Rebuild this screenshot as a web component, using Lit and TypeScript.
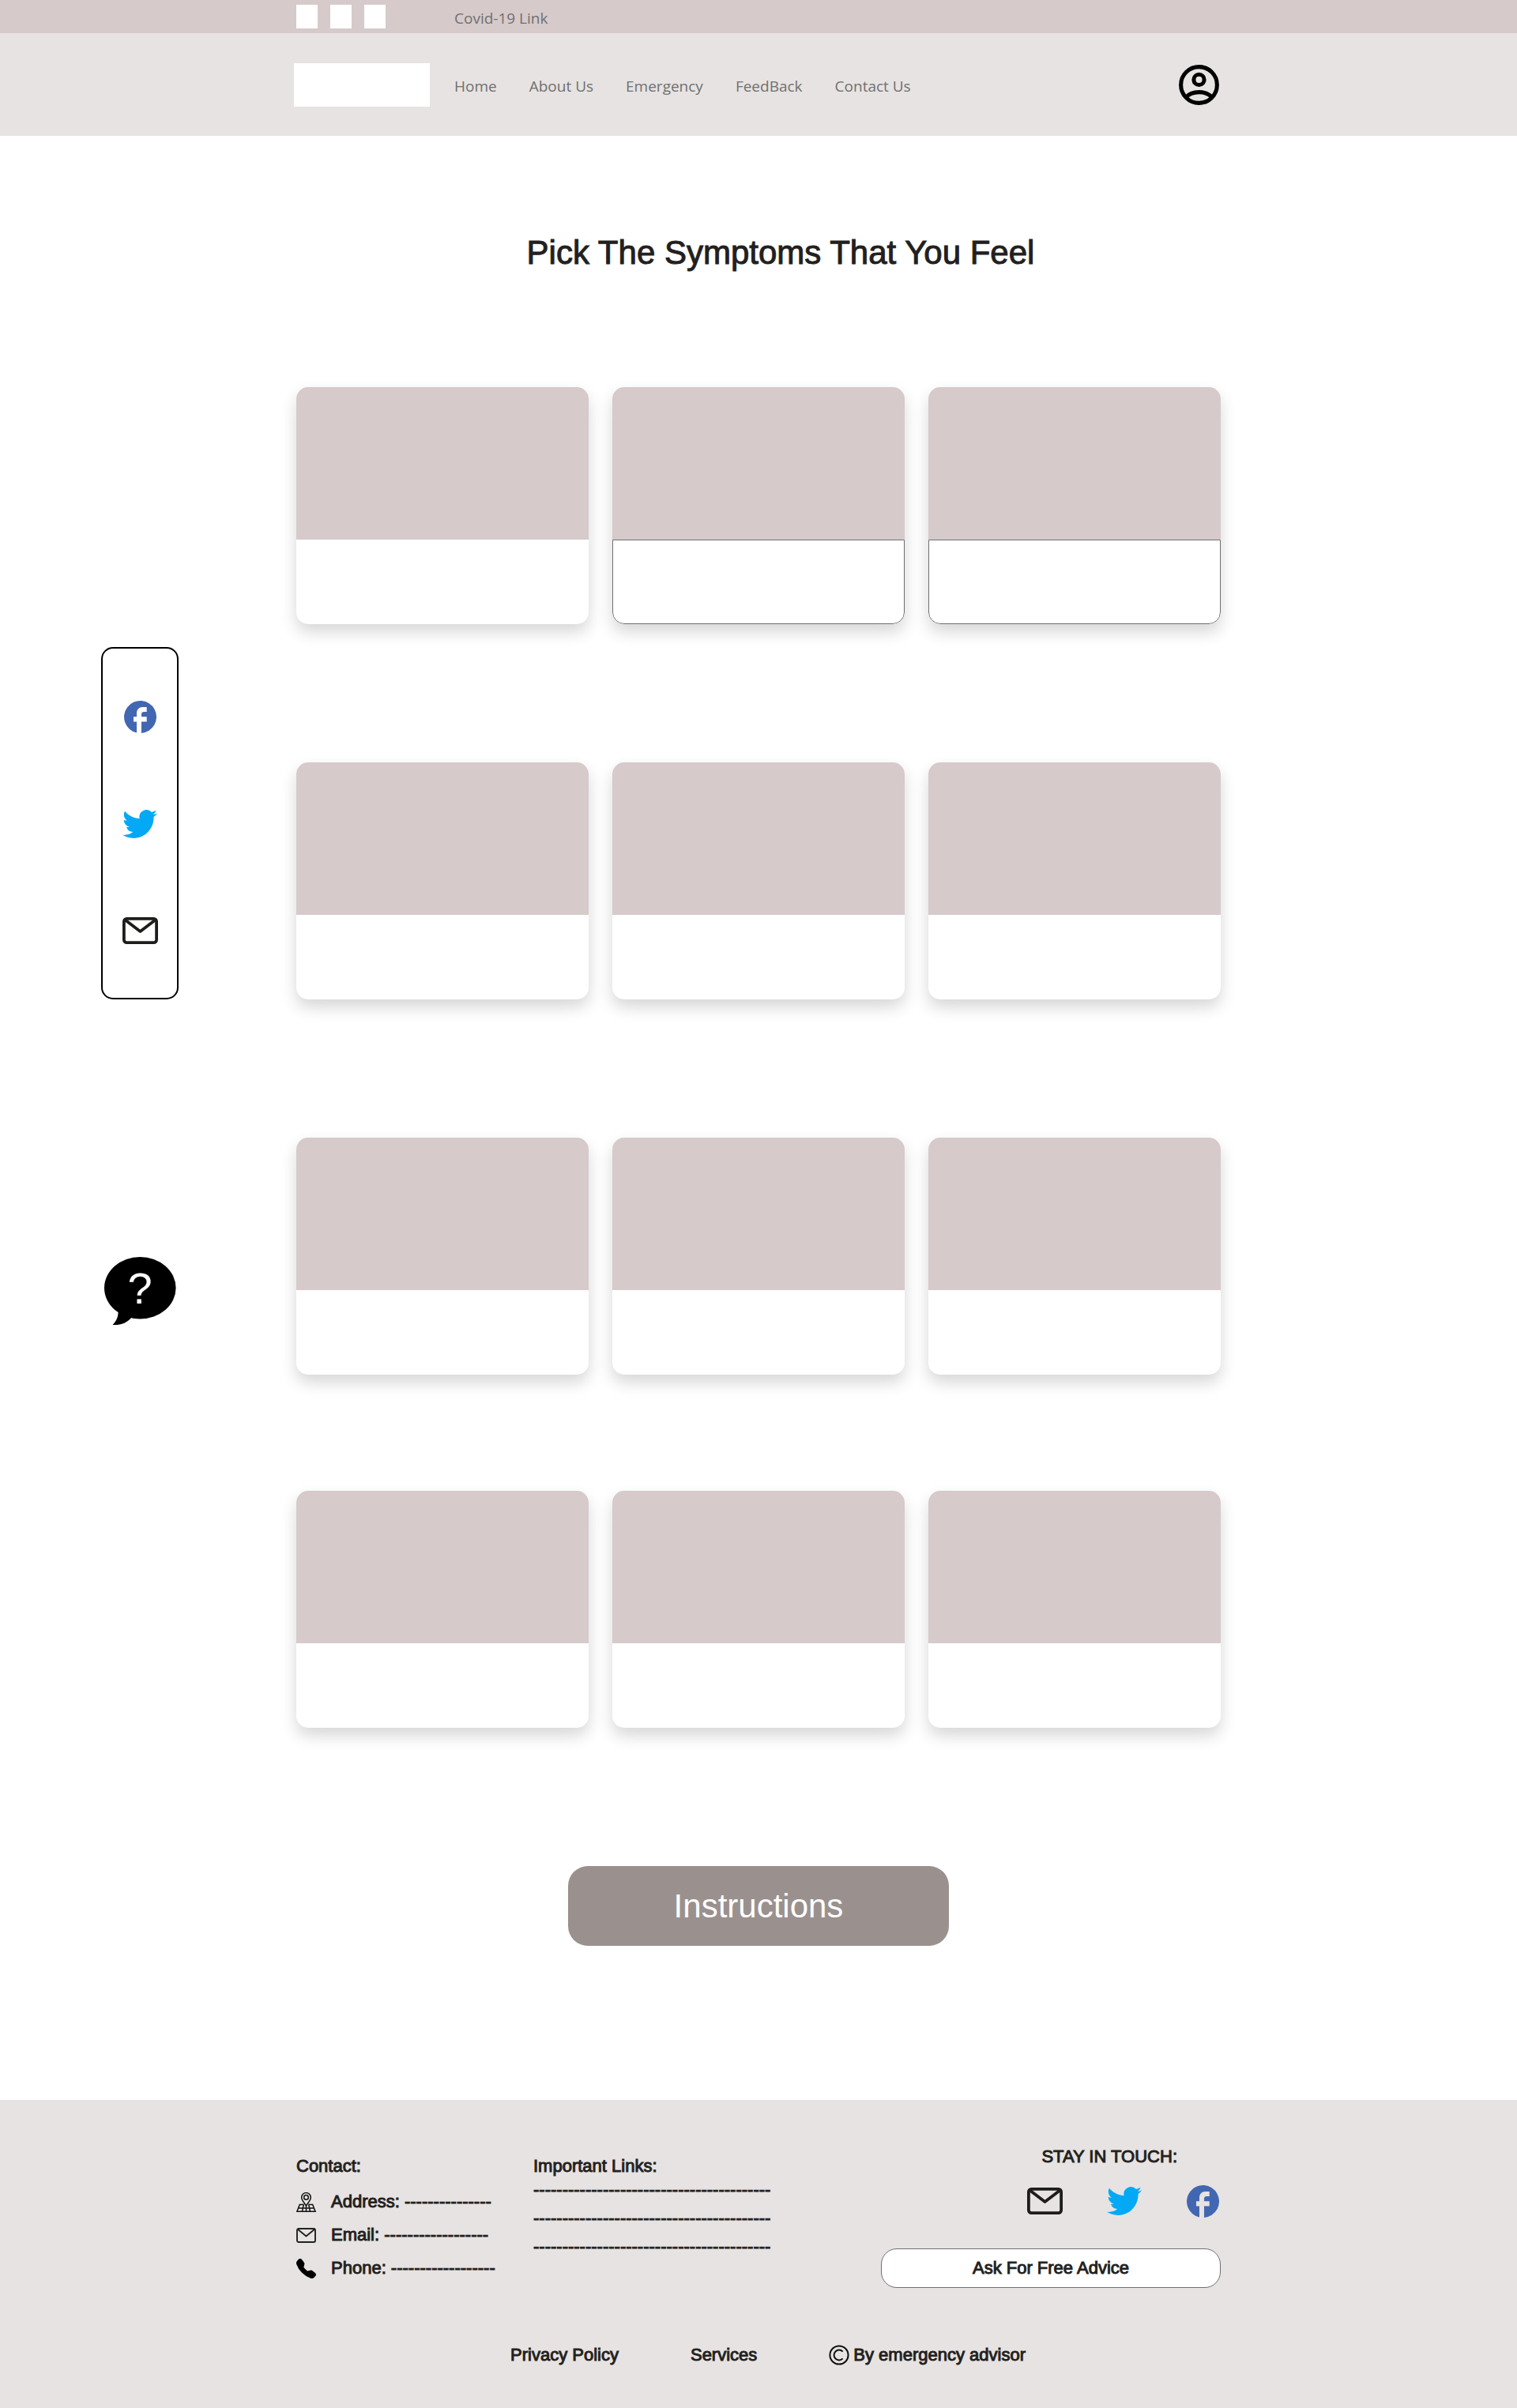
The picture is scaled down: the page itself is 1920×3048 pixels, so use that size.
import { LitElement, html, css, svg } from "lit";
import { customElement, property } from "lit/decorators.js";

type IconName = "account" | "facebook" | "twitter" | "mail" | "mail-small" | "map" | "phone" | "copyright" | "help";

const icons: Record<IconName, { w: number; h: number; box: string; art: unknown }> = {
  account: {
    w: 61, h: 61, box: "0 0 24 24",
    art: svg`<g fill="none" stroke="#000" stroke-width="2"><circle cx="12" cy="12" r="9"/><circle cx="12" cy="9.400" r="2.600"/><path d="M5.200 18.400C7 16.400 9.400 15.600 12 15.600S17 16.400 18.800 18.400"/></g>`,
  },
  facebook: {
    w: 41, h: 41, box: "0 0 41 41",
    art: svg`<path fill="#4267b2" d="M16 40.500A20.500 20.500 0 1 1 22 40.950V26.500H28.700V20.300H22V17.500C22 15 23 14 25.500 14H28.700V8H23.500C19 8 16 11 16 16V20.300H12V26.500H16Z"/>`,
  },
  twitter: {
    w: 44, h: 44, box: "0 0 24 24",
    art: svg`<path fill="#03a9f4" d="M23.953 4.57a10 10 0 01-2.825.775 4.958 4.958 0 002.163-2.723c-.951.555-2.005.959-3.127 1.184a4.92 4.92 0 00-8.384 4.482C7.69 8.095 4.067 6.13 1.64 3.162a4.822 4.822 0 00-.666 2.475c0 1.71.87 3.213 2.188 4.096a4.904 4.904 0 01-2.228-.616v.06a4.923 4.923 0 003.946 4.827 4.996 4.996 0 01-2.212.085 4.936 4.936 0 004.604 3.417 9.867 9.867 0 01-6.102 2.105c-.39 0-.779-.023-1.17-.067a13.995 13.995 0 007.557 2.209c9.053 0 13.998-7.496 13.998-13.985 0-.21 0-.42-.015-.63A9.935 9.935 0 0024 4.59z"/>`,
  },
  mail: {
    w: 45, h: 34, box: "0 0 45 34",
    art: svg`<g fill="none" stroke="#1d1d1b" stroke-width="3.800" stroke-linejoin="round"><rect x="1.900" y="1.900" width="41.200" height="30.200" rx="3.500"/><path d="M3.500 3.500L22.500 18L41.500 3.500"/></g>`,
  },
  "mail-small": {
    w: 25, h: 19, box: "0 0 25 19",
    art: svg`<g fill="none" stroke="#222" stroke-width="1.900" stroke-linejoin="round"><rect x="1" y="1" width="23" height="17" rx="2"/><path d="M1.500 1.500L12.500 10.500L23.500 1.500"/></g>`,
  },
  map: {
    w: 25, h: 25, box: "0 0 25 25",
    art: svg`<g fill="none" stroke="#111" stroke-width="1.500"><path d="M12.500 17.200C10.200 13 6.700 10 6.700 6.400A5.800 5.800 0 0 1 18.300 6.400C18.300 10 14.800 13 12.500 17.200Z"/><circle cx="12.500" cy="6.400" r="2.800"/><path d="M9.500 15.500H4.300L.9 24.200H24.100L20.700 15.500H15.500M2.700 20H22.300M9.300 15.500L7.500 24.200M15.700 15.500L17.500 24.200M12.500 17V24.200"/></g>`,
  },
  phone: {
    w: 25, h: 25, box: "0 0 16 16",
    art: svg`<path d="M1.885.511a1.745 1.745 0 0 1 2.610.163L6.290 2.980c.329.423.445.974.315 1.494l-.547 2.190a.678.678 0 0 0 .178.643l2.457 2.457a.678.678 0 0 0 .644.178l2.189-.547a1.745 1.745 0 0 1 1.494.315l2.306 1.794c.829.645.905 1.870.163 2.611l-1.034 1.034c-.74.74-1.846 1.065-2.877.702a18.634 18.634 0 0 1-7.010-4.420 18.634 18.634 0 0 1-4.420-7.009c-.362-1.030-.037-2.137.703-2.877z"/>`,
  },
  copyright: {
    w: 26, h: 26, box: "0 0 26 26",
    art: svg`<g fill="none" stroke="#111" stroke-width="2"><circle cx="13" cy="13" r="11.600"/><path d="M17.600 8.600A6.400 6.400 0 1 0 17.600 17.400"/></g>`,
  },
  help: {
    w: 91, h: 87, box: "0 0 91 87",
    art: svg`<ellipse cx="45.300" cy="39.300" rx="45.300" ry="39.300"/><path d="M17.600 68C18 75 15.500 81 10.600 86C21 86.500 29 83.500 35 76Z"/><text x="45" y="59" text-anchor="middle" font-family="Liberation Sans, sans-serif" font-size="56" fill="#fff">?</text>`,
  },
};

const icon = (name: IconName) => {
  const { w, h, box, art } = icons[name];
  return html`<svg width=${w} height=${h} viewBox=${box} aria-hidden="true">${art}</svg>`;
};

const reset = css`
  :host { display: block; }
  * { box-sizing: border-box; }
  svg { display: block; flex: none; }
  a { color: inherit; text-decoration: none; }
  button { margin: 0; padding: 0; border: 0; background: none; color: inherit; font: inherit; cursor: pointer; }
`;

@customElement("site-header")
export class SiteHeader extends LitElement {
  static styles = [reset, css`
    :host { font: 19px/26px "Open Sans", "Noto Sans", sans-serif; color: #707070; }
    .strip { background: #d6caca; }
    .bar { background: #e7e3e2; }
    .inner { display: grid; grid-template-columns: 203px 1fr auto; align-items: center; max-width: 1176px; margin: 0 auto; }
    .strip .inner { min-height: 42px; }
    .bar .inner { min-height: 130px; }
    .squares { display: flex; gap: 16px; padding-left: 3px; }
    .square { width: 27px; height: 30px; background: #fff; }
    .logo { width: 172px; height: 55px; background: #fff; }
    .links { display: flex; flex-wrap: wrap; gap: 41px; padding-top: 3px; }
  `];

  render() {
    return html`
      <div class="strip"><div class="inner">
        <div class="squares"><a class="square" href="#" aria-label="Profile one"></a><a class="square" href="#" aria-label="Profile two"></a><a class="square" href="#" aria-label="Profile three"></a></div>
        <div class="links"><a href="#covid">Covid-19 Link</a></div>
      </div></div>
      <div class="bar"><div class="inner">
        <a class="logo" href="#" aria-label="Logo"></a>
        <nav class="links">
          ${["Home", "About Us", "Emergency", "FeedBack", "Contact Us"].map((t) => html`<a href="#">${t}</a>`)}
        </nav>
        <button aria-label="Account">${icon("account")}</button>
      </div></div>`;
  }
}

@customElement("symptom-card")
export class SymptomCard extends LitElement {
  @property({ type: Boolean }) outlined = false;

  static styles = [reset, css`
    .card { display: block; width: 100%; border-radius: 15px; overflow: hidden; background: #fff; box-shadow: 0 10px 20px rgba(0, 0, 0, 0.16); }
    .media { display: block; height: 193px; background: #d6caca; }
    .body { display: block; height: 107px; border-radius: 0 0 15px 15px; }
    .outlined { border: 1px solid #707070; }
  `];

  render() {
    return html`<button class="card" aria-label="Symptom"><span class="media"></span><span class=${this.outlined ? "body outlined" : "body"}></span></button>`;
  }
}

@customElement("side-rail")
export class SideRail extends LitElement {
  static styles = [reset, css`
    .rail { display: flex; flex-direction: column; align-items: center; gap: 326px; width: 98px; }
    .panel { display: flex; flex-direction: column; gap: 90px; width: 100%; padding: 64px 0 63px; border: 2px solid #000; border-radius: 15px; background: #fff; }
    .item { display: grid; place-items: center; height: 45px; }
  `];

  render() {
    return html`<div class="rail">
      <div class="panel">
        <a class="item" href="#" aria-label="Facebook">${icon("facebook")}</a>
        <a class="item" href="#" aria-label="Twitter">${icon("twitter")}</a>
        <a class="item" href="#" aria-label="Mail">${icon("mail")}</a>
      </div>
      <button aria-label="Help">${icon("help")}</button>
    </div>`;
  }
}

@customElement("site-footer")
export class SiteFooter extends LitElement {
  static styles = [reset, css`
    :host { background: #e7e3e2; color: #231f20; font: 22px/26px "Liberation Sans", Arial, sans-serif; -webkit-text-stroke: 1px; }
    .inner { max-width: 1170px; margin: 0 auto; padding: 59px 0 54px; }
    .columns { display: grid; grid-template-columns: 300px 1fr 430px; }
    .column { padding-top: 12px; }
    h2 { margin: 0; font: inherit; }
    .contacts { display: flex; flex-direction: column; gap: 16px; padding-top: 19px; }
    .contact { display: grid; grid-template-columns: 44px 1fr; align-items: center; }
    .lines { display: flex; flex-direction: column; gap: 10px; padding-top: 4px; }
    .touch { display: flex; flex-direction: column; align-items: flex-end; }
    .touch h2 { padding-right: 55px; }
    .social { display: flex; gap: 55px; padding: 21px 0 38px; }
    .item { display: grid; place-items: center; width: 45px; height: 44px; }
    .advice { width: 100%; height: 50px; border: 1px solid #707070; border-radius: 20px; background: #fff; -webkit-text-stroke: inherit; }
    .legal { display: flex; justify-content: center; gap: 91px; padding: 72px 0 0 24px; }
    .owner { display: flex; gap: 5px; }
  `];

  render() {
    const contact = (name: IconName, text: string, dashes: number) =>
      html`<div class="contact">${icon(name)}<span>${text}: ${"-".repeat(dashes)}</span></div>`;
    return html`<footer class="inner">
      <div class="columns">
        <section class="column">
          <h2>Contact:</h2>
          <div class="contacts">
            ${contact("map", "Address", 15)}${contact("mail-small", "Email", 18)}${contact("phone", "Phone", 18)}
          </div>
        </section>
        <section class="column">
          <h2>Important Links:</h2>
          <div class="lines">${[1, 2, 3].map(() => html`<a href="#">${"-".repeat(41)}</a>`)}</div>
        </section>
        <section class="touch">
          <h2>STAY IN TOUCH:</h2>
          <div class="social">
            <a class="item" href="#" aria-label="Mail">${icon("mail")}</a>
            <a class="item" href="#" aria-label="Twitter">${icon("twitter")}</a>
            <a class="item" href="#" aria-label="Facebook">${icon("facebook")}</a>
          </div>
          <button class="advice">Ask For Free Advice</button>
        </section>
      </div>
      <div class="legal">
        <a href="#">Privacy Policy</a><a href="#">Services</a>
        <span class="owner">${icon("copyright")}<span>By emergency advisor</span></span>
      </div>
    </footer>`;
  }
}

@customElement("app-root")
export class AppRoot extends LitElement {
  static styles = [reset, css`
    :host { background: #fff; font-family: "Liberation Sans", Arial, sans-serif; }
    .main { display: grid; grid-template-columns: minmax(0, 1fr) minmax(0, 1170px) minmax(0, 1fr); }
    .rail { padding: 647px 0 0 128px; }
    .content { display: flex; flex-direction: column; padding: 124px 0 195px; }
    h1 { margin: 0; padding: 0 0 146px 56px; font-size: 42px; line-height: 48px; font-weight: 400; text-align: center; color: #231f20; -webkit-text-stroke: 1px; }
    .row { display: grid; grid-template-columns: repeat(3, 1fr); gap: 30px; padding-bottom: 175px; }
    .row.close { padding-bottom: 147px; }
    .instructions { align-self: center; width: 482px; max-width: 100%; height: 101px; border-radius: 25px; background: #9a918f; color: #fff; font-size: 42px; }
  `];

  render() {
    const rows = [
      { close: false, outlined: [false, true, true] },
      { close: false, outlined: [false, false, false] },
      { close: true, outlined: [false, false, false] },
      { close: false, outlined: [false, false, false] },
    ];
    return html`
      <site-header></site-header>
      <main class="main">
        <side-rail class="rail"></side-rail>
        <div class="content">
          <h1>Pick The Symptoms That You Feel</h1>
          ${rows.map((row) => html`<div class=${row.close ? "row close" : "row"}>
            ${row.outlined.map((o) => html`<symptom-card ?outlined=${o}></symptom-card>`)}
          </div>`)}
          <button class="instructions">Instructions</button>
        </div>
      </main>
      <site-footer></site-footer>`;
  }
}
